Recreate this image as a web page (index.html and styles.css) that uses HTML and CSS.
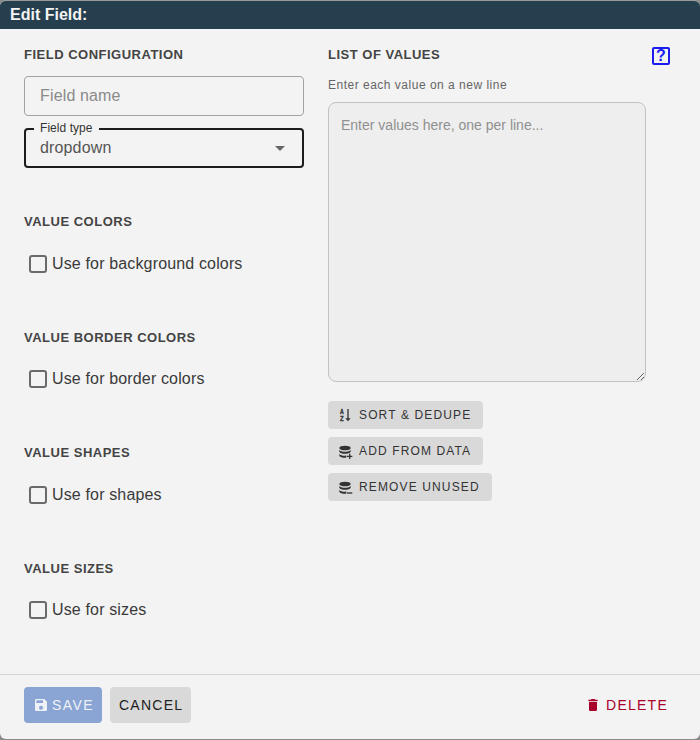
FILE: index.html
```html
<!DOCTYPE html>
<html lang="en">
<head>
    <meta charset="UTF-8">
    <meta name="viewport" content="width=device-width, initial-scale=1.0">
    <title>Edit Field</title>
    <link rel="stylesheet" href="styles.css">
</head>
<body>
    <div id="dialog">
        <div id="dialogTitle">Edit Field:</div>

        <div id="dialogBody">
            <div id="leftColumn">
                <h3 class="sectionTitle">Field configuration</h3>
                <div class="textField">
                    <span class="placeholder">Field name</span>
                </div>
                <div class="selectField">
                    <span class="floatLabel">Field type</span>
                    <span class="selectValue">dropdown</span>
                    <span class="selectArrow"></span>
                </div>

                <div class="valueSection firstSection">
                    <h3 class="sectionTitle">Value colors</h3>
                    <label class="checkRow"><span class="checkBox"></span>Use for background colors</label>
                </div>
                <div class="valueSection">
                    <h3 class="sectionTitle">Value border colors</h3>
                    <label class="checkRow"><span class="checkBox"></span>Use for border colors</label>
                </div>
                <div class="valueSection">
                    <h3 class="sectionTitle">Value shapes</h3>
                    <label class="checkRow"><span class="checkBox"></span>Use for shapes</label>
                </div>
                <div class="valueSection">
                    <h3 class="sectionTitle">Value sizes</h3>
                    <label class="checkRow"><span class="checkBox"></span>Use for sizes</label>
                </div>
            </div>

            <div id="rightColumn">
                <h3 class="sectionTitle">List of values</h3>
                <p class="hint">Enter each value on a new line</p>
                <textarea id="valuesInput" placeholder="Enter values here, one per line..."></textarea>
                <div id="listButtons">
                    <button class="smallButton">
                        <svg viewBox="0 0 24 24" width="16" height="16"><path fill="currentColor" d="M15.500 3h2v14h3l-4 4.500-4-4.500h3z"/><text x="4.500" y="10.500" class="iconLetter" textLength="6.500" lengthAdjust="spacingAndGlyphs">A</text><text x="4.500" y="20.500" class="iconLetter" textLength="6.500" lengthAdjust="spacingAndGlyphs">Z</text></svg>
                        Sort &amp; dedupe
                    </button>
                    <button class="smallButton">
                        <svg viewBox="0 0 24 24" width="16" height="16"><g transform="translate(1 2)" fill="currentColor"><ellipse cx="11" cy="5.500" rx="8.500" ry="3.500"/><path d="M2.500 8c1 2 4.500 3 8.500 3s7.500-1 8.500-3v3c-1 2-4.500 3-8.500 3s-7.500-1-8.500-3z"/><path d="M2.500 14c1 2 4.500 3 8.500 3 .7 0 1.300 0 2-.1V20c-.7.100-1.300.100-2 .100-4 0-7.500-1-8.500-3z"/><path d="M17 14h2v3h3v2h-3v3h-2v-3h-3v-2h3z"/></g></svg>
                        Add from data
                    </button>
                    <button class="smallButton">
                        <svg viewBox="0 0 24 24" width="16" height="16"><g transform="translate(1 2)" fill="currentColor"><ellipse cx="11" cy="5.500" rx="8.500" ry="3.500"/><path d="M2.500 8c1 2 4.500 3 8.500 3s7.500-1 8.500-3v3c-1 2-4.500 3-8.500 3s-7.500-1-8.500-3z"/><path d="M2.500 14c1 2 4.500 3 8.500 3 .7 0 1.300 0 2-.1V20c-.7.100-1.300.100-2 .100-4 0-7.500-1-8.500-3z"/><path d="M14 18h8v2h-8z"/></g></svg>
                        Remove unused
                    </button>
                </div>
            </div>

            <div id="helpIcon">?</div>
        </div>

        <div id="dialogFooter">
            <button class="footerButton" id="saveButton">
                <svg viewBox="0 0 24 24" width="16" height="16"><path fill="currentColor" d="M17 3H5a2 2 0 0 0-2 2v14a2 2 0 0 0 2 2h14a2 2 0 0 0 2-2V7zm-5 16a3 3 0 1 1 0-6 3 3 0 0 1 0 6zm3-10H5V5h10z"/></svg>
                Save
            </button>
            <button class="footerButton" id="cancelButton">Cancel</button>
            <button class="footerButton" id="deleteButton">
                <svg viewBox="0 0 24 24" width="16" height="16"><path fill="currentColor" d="M6 19c0 1.100.9 2 2 2h8a2 2 0 0 0 2-2V7H6zM19 4h-3.500l-1-1h-5l-1 1H5v2h14z"/></svg>
                Delete
            </button>
        </div>
    </div>
</body>
</html>
```

FILE: styles.css
```css
* {
    box-sizing: border-box;
}
body {
    margin: 0;
    height: 740px;
    overflow: hidden;
    background-color: #8a8a8a;
    font-family: "Liberation Sans", Arial, sans-serif;
}
#dialog {
    height: 739px;
    display: flex;
    flex-direction: column;
    background-color: #f3f3f3;
    border-radius: 6px;
    border-top: 1px solid #9a9a9a;
    overflow: hidden;
}
#dialogTitle {
    height: 28px;
    flex-shrink: 0;
    padding-left: 10px;
    line-height: 28px;
    font-size: 16px;
    font-weight: bold;
    color: #f3f3f3;
    background-color: #253f4f;
}
#dialogBody {
    flex: 1;
    min-height: 0;
    position: relative;
    display: flex;
    gap: 24px;
    padding: 18px 24px 0;
}
#leftColumn {
    width: 280px;
}
#rightColumn {
    width: 318px;
}
.sectionTitle {
    margin: 0;
    height: 16px;
    line-height: 16px;
    font-size: 13px;
    font-weight: bold;
    letter-spacing: 0.5px;
    text-transform: uppercase;
    color: #444;
}
.textField {
    height: 40px;
    margin-top: 13px;
    padding-left: 15px;
    line-height: 38px;
    font-size: 16px;
    letter-spacing: 0.15px;
    border: 1px solid #a3a3a3;
    border-radius: 4px;
}
.placeholder {
    color: #8a8a8a;
}
.selectField {
    position: relative;
    height: 40px;
    margin-top: 12px;
    padding-left: 14px;
    line-height: 36px;
    font-size: 16px;
    letter-spacing: 0.15px;
    color: #555;
    border: 2px solid #1c1c1c;
    border-radius: 4px;
}
.floatLabel {
    position: absolute;
    top: -9px;
    left: 8px;
    padding: 0 6px;
    height: 14px;
    line-height: 14px;
    font-size: 12px;
    letter-spacing: 0.05px;
    color: #333;
    background-color: #f3f3f3;
}
.selectArrow {
    position: absolute;
    top: 16px;
    right: 17px;
    border-left: 5px solid transparent;
    border-right: 5px solid transparent;
    border-top: 5px solid #666;
}
.valueSection {
    height: 115.5px;
}
.firstSection {
    margin-top: 46px;
}
.checkRow {
    display: flex;
    align-items: center;
    gap: 5px;
    margin-top: 23.75px;
    padding-left: 5px;
    height: 20px;
    font-size: 16px;
    letter-spacing: 0.15px;
    color: #3a3a3a;
}
.checkBox {
    width: 18px;
    height: 18px;
    border: 2px solid #6a6a6a;
    border-radius: 3px;
}
.hint {
    margin: 14px 0 0;
    height: 16px;
    line-height: 16px;
    font-size: 12px;
    letter-spacing: 0.5px;
    color: #666;
}
#valuesInput {
    display: block;
    width: 318px;
    height: 280px;
    margin-top: 9px;
    padding: 14px 12px;
    font-family: inherit;
    font-size: 14px;
    background-color: #eeeeee;
    border: 1px solid #c2c2c2;
    border-radius: 8px;
    outline: none;
}
#valuesInput::placeholder {
    color: #909090;
    opacity: 1;
}
#listButtons {
    display: flex;
    flex-direction: column;
    align-items: flex-start;
    gap: 8px;
    margin-top: 19px;
}
button {
    font-family: inherit;
    border: none;
    cursor: pointer;
    text-transform: uppercase;
}
.smallButton {
    display: flex;
    align-items: center;
    gap: 6px;
    height: 28px;
    padding: 0 12px 0 9px;
    font-size: 12px;
    letter-spacing: 1.13px;
    color: #333;
    background-color: #d9d9d9;
    border-radius: 4px;
}
.iconLetter {
    font-size: 10px;
    font-weight: bold;
    fill: currentColor;
    stroke: currentColor;
    stroke-width: 0.5px;
}
#helpIcon {
    position: absolute;
    top: 18px;
    left: 652px;
    width: 18px;
    height: 18px;
    text-align: center;
    line-height: 14px;
    font-size: 16px;
    font-weight: bold;
    color: #1c1cf0;
    border: 2px solid #1c1cf0;
    border-radius: 2px;
}
#dialogFooter {
    height: 65px;
    flex-shrink: 0;
    display: flex;
    align-items: flex-start;
    gap: 8px;
    padding: 12px 24px 0;
    border-top: 1px solid #d6d6d6;
}
.footerButton {
    display: flex;
    align-items: center;
    gap: 4px;
    height: 36px;
    padding: 0 8px;
    font-size: 14px;
    letter-spacing: 1.25px;
    border-radius: 4px;
}
#saveButton {
    gap: 3px;
    width: 78px;
    padding-left: 9px;
    letter-spacing: 1.4px;
    color: #eef2f8;
    background-color: #8aa5d3;
}
#cancelButton {
    width: 81px;
    padding: 0 7px 0 9px;
    color: #222;
    background-color: #d9d9d9;
}
#deleteButton {
    margin-left: auto;
    gap: 5px;
    color: #a8002a;
    background: none;
}
```
